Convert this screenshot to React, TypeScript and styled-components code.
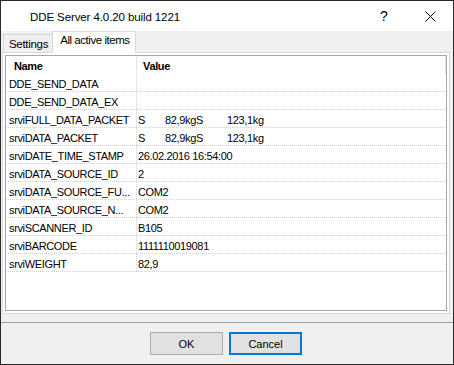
import React from 'react';
import styled, { createGlobalStyle } from 'styled-components';

const Global = createGlobalStyle`
  html, body { margin: 0; padding: 0; background: #ffffff; }
  #root { width: 454px; height: 365px; }
`;

const Window = styled.div`
  width: 454px;
  height: 365px;
  box-sizing: border-box;
  border: 1px solid #2b2b2b;
  display: flex;
  flex-direction: column;
  background: #f0f0f0;
  font-family: "Liberation Sans", Arial, sans-serif;
  font-size: 11px;
  color: #000;
  overflow: hidden;
`;

const TitleBar = styled.div`
  height: 30px;
  flex-shrink: 0;
  background: #ffffff;
  display: flex;
  align-items: center;
`;

const Title = styled.div`
  flex: 1;
  padding-left: 29px;
  font-size: 11.5px;
  letter-spacing: -0.1px;
  padding-top: 1px;
`;

const CaptionButton = styled.div`
  width: 46px;
  height: 30px;
  display: flex;
  align-items: center;
  justify-content: center;
  font-size: 14px;
`;

const TabStrip = styled.div`
  height: 21px;
  flex-shrink: 0;
  display: flex;
  align-items: flex-end;
  padding-left: 2px;
  position: relative;
  z-index: 1;
`;

const Tab = styled.div<{ $active?: boolean }>`
  box-sizing: border-box;
  border: 1px solid #d9d9d9;
  border-bottom: none;
  background: ${(p) => (p.$active ? '#ffffff' : '#f0f0f0')};
  height: ${(p) => (p.$active ? '22px' : '18px')};
  margin-bottom: ${(p) => (p.$active ? '-1px' : '0')};
  margin-left: ${(p) => (p.$active ? '-1px' : '0')};
  padding: ${(p) => (p.$active ? '2px 5px 0 7px' : '3px 4px 0 5px')};
  letter-spacing: ${(p) => (p.$active ? '-0.45px' : '-0.3px')};
  line-height: 13px;
  font-size: 11.5px;
`;

const Panel = styled.div`
  box-sizing: border-box;
  height: 262px;
  margin: 0 3px 0 1px;
  border: 1px solid #d9d9d9;
  background: #ffffff;
  padding: 2px;
  display: flex;
`;

const ListView = styled.div`
  flex: 1;
  box-sizing: border-box;
  border: 1px solid #a6a6a6;
  background: #ffffff;
  display: flex;
  flex-direction: column;
  letter-spacing: -0.35px;
`;

const HeaderRow = styled.div`
  display: flex;
  height: 18px;
  flex-shrink: 0;
`;

const HeaderCell = styled.div<{ $w: number; $pad: number }>`
  width: ${(p) => p.$w}px;
  box-sizing: border-box;
  padding-left: ${(p) => p.$pad}px;
  font-weight: bold;
  line-height: 20px;
  border-right: 1px solid #e5e5e5;
`;

const Row = styled.div`
  display: flex;
  height: 18px;
  width: 439px;
  box-sizing: border-box;
  border-bottom: 1px dotted #d2d2d2;
`;

const NameCell = styled.div`
  width: 131px;
  box-sizing: border-box;
  padding-left: 3px;
  border-right: 1px dotted #d2d2d2;
  line-height: 20px;
  white-space: nowrap;
  overflow: hidden;
`;

const ValueCell = styled.div`
  flex: 1;
  padding-left: 1px;
  line-height: 20px;
  white-space: nowrap;
  display: flex;
`;

const TabStop = styled.span<{ $w?: number }>`
  display: inline-block;
  width: ${(p) => (p.$w ? `${p.$w}px` : 'auto')};
`;

const Footer = styled.div`
  flex: 1;
  display: flex;
  flex-direction: column;
  margin-top: 8px;
  border-top: 1px solid #a0a0a0;
`;

const ButtonRow = styled.div`
  display: flex;
  justify-content: center;
  gap: 6px;
  padding-top: 9px;
  padding-right: 2px;
`;

const Button = styled.div<{ $default?: boolean }>`
  width: 73px;
  height: 23px;
  box-sizing: border-box;
  background: #e1e1e1;
  border: ${(p) => (p.$default ? '2px solid #0078d7' : '1px solid #adadad')};
  display: flex;
  align-items: center;
  justify-content: center;
  font-size: 11px;
  padding-top: 1px;
`;

type Item = { name: string; value: string[] };

const items: Item[] = [
  { name: 'DDE_SEND_DATA', value: [] },
  { name: 'DDE_SEND_DATA_EX', value: [] },
  { name: 'srviFULL_DATA_PACKET', value: ['S', '82,9kgS', '123,1kg'] },
  { name: 'srviDATA_PACKET', value: ['S', '82,9kgS', '123,1kg'] },
  { name: 'srviDATE_TIME_STAMP', value: ['26.02.2016 16:54:00'] },
  { name: 'srviDATA_SOURCE_ID', value: ['2'] },
  { name: 'srviDATA_SOURCE_FU...', value: ['COM2'] },
  { name: 'srviDATA_SOURCE_N...', value: ['COM2'] },
  { name: 'srviSCANNER_ID', value: ['B105'] },
  { name: 'srviBARCODE', value: ['1111110019081'] },
  { name: 'srviWEIGHT', value: ['82,9'] },
];

const stops = [27, 62];

const CloseIcon = () => (
  <svg width="11" height="11" viewBox="0 0 11 11">
    <path d="M0.5 0.5 L10.5 10.5 M10.5 0.5 L0.5 10.5" stroke="#000" strokeWidth="1" fill="none" />
  </svg>
);

export default function App() {
  return (
    <>
      <Global />
      <Window>
        <TitleBar>
          <Title>DDE Server 4.0.20 build 1221</Title>
          <CaptionButton>?</CaptionButton>
          <CaptionButton>
            <CloseIcon />
          </CaptionButton>
        </TitleBar>
        <TabStrip>
          <Tab>Settings</Tab>
          <Tab $active>All active items</Tab>
        </TabStrip>
        <Panel>
          <ListView>
            <HeaderRow>
              <HeaderCell $w={131} $pad={8}>Name</HeaderCell>
              <HeaderCell $w={309} $pad={6}>Value</HeaderCell>
            </HeaderRow>
            {items.map((it) => (
              <Row key={it.name}>
                <NameCell>{it.name}</NameCell>
                <ValueCell>
                  {it.value.map((v, i) => (
                    <TabStop key={i} $w={i < it.value.length - 1 ? stops[i] : undefined}>
                      {v}
                    </TabStop>
                  ))}
                </ValueCell>
              </Row>
            ))}
          </ListView>
        </Panel>
        <Footer>
          <ButtonRow>
            <Button>OK</Button>
            <Button $default>Cancel</Button>
          </ButtonRow>
        </Footer>
      </Window>
    </>
  );
}
